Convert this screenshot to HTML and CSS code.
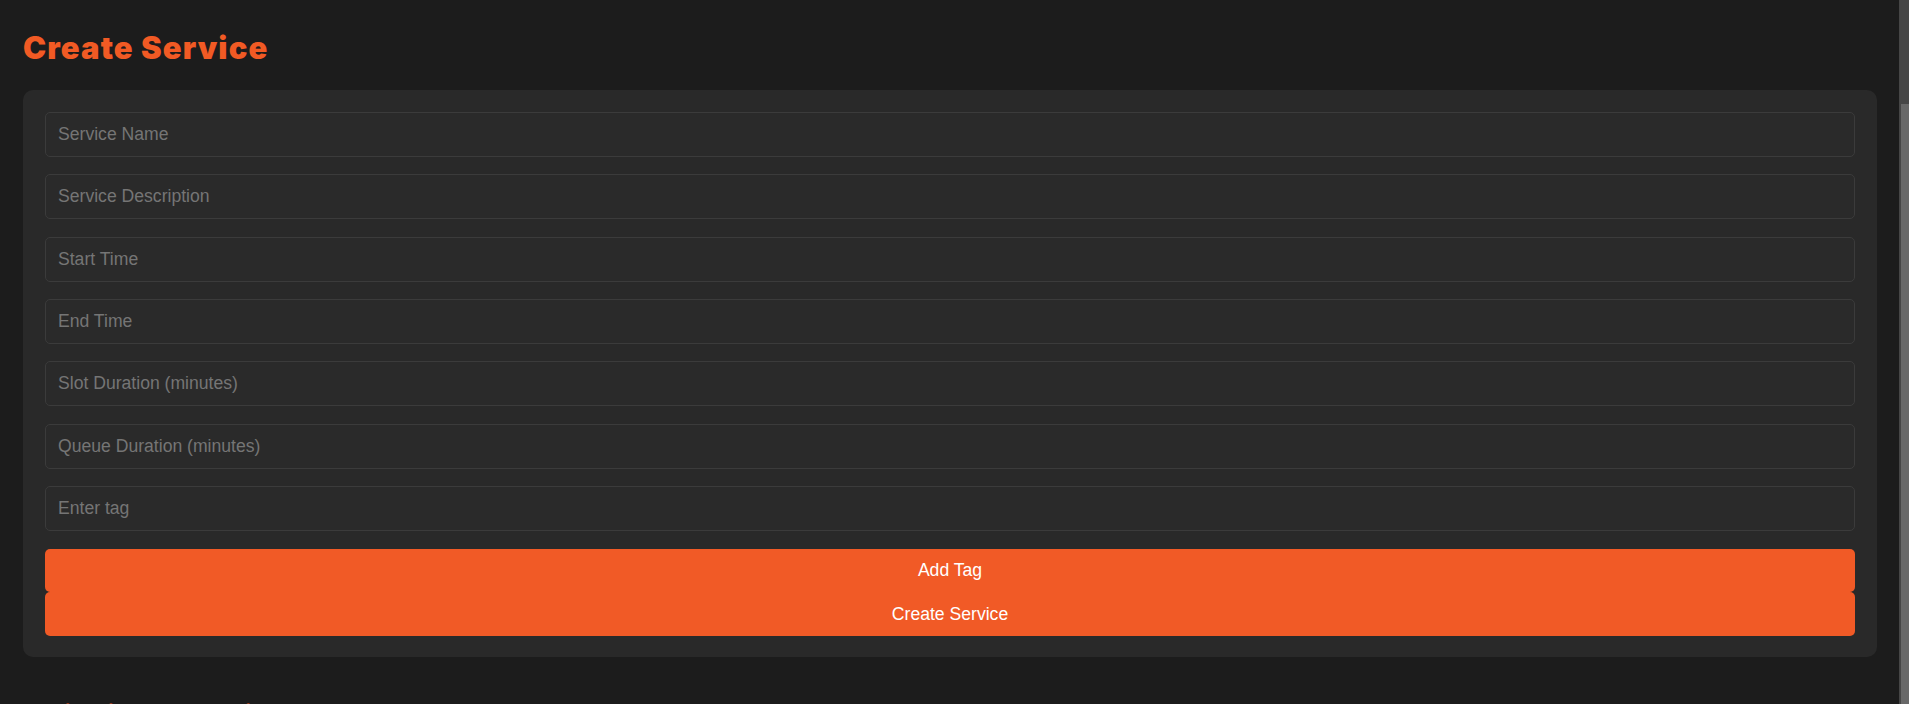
FILE: index.html
```html
<!DOCTYPE html>
<html lang="en">
<head>
<meta charset="utf-8">
<title>Create Service</title>
<link rel="stylesheet" href="styles.css">
</head>
<body>
<div class="viewport">
  <main class="page">
    <h1 class="title">Create Service</h1>
    <form class="card">
      <input class="field" type="text" placeholder="Service Name">
      <input class="field" type="text" placeholder="Service Description">
      <input class="field" type="text" placeholder="Start Time">
      <input class="field" type="text" placeholder="End Time">
      <input class="field" type="text" placeholder="Slot Duration (minutes)">
      <input class="field" type="text" placeholder="Queue Duration (minutes)">
      <input class="field" type="text" placeholder="Enter tag">
      <div class="actions">
        <button class="btn" type="button">Add Tag</button>
        <button class="btn" type="button">Create Service</button>
      </div>
    </form>
    <h2 class="title title-next">Existing Services</h2>
  </main>
  <div class="scrollbar"><div class="thumb"></div></div>
</div>
</body>
</html>
```
FILE: styles.css
```css
* { box-sizing: border-box; }

html, body {
  margin: 0;
  padding: 0;
  background: #1c1c1c;
}

.viewport {
  display: flex;
  width: 1909px;
  height: 704px;
  overflow: hidden;
}

.page {
  flex: 1;
  min-width: 0;
  height: 704px;
  overflow: hidden;
  padding: 0 22px 0 23px;
}

.title {
  margin: 28px 0 0;
  height: 62px;
  font-family: "Inter", "Liberation Sans", sans-serif;
  font-weight: 900;
  font-size: 31px;
  letter-spacing: 1.1px;
  line-height: 40px;
  color: #f15a24;
}

.title-next {
  margin-top: 40px;
}

.card {
  background: #292929;
  border-radius: 10px;
  padding: 22px 22px 21px;
  display: flex;
  flex-direction: column;
  gap: 17.33px;
}

.field {
  display: block;
  width: 100%;
  height: 45px;
  margin: 0;
  padding: 0 12px;
  background: #2a2a2a;
  border: 1px solid #3b3b3b;
  border-radius: 5px;
  font-family: "Liberation Sans", Arial, sans-serif;
  font-size: 17.6px;
  color: #dddddd;
  outline: none;
}

.field::placeholder {
  color: #757575;
}

.actions {
  display: flex;
  flex-direction: column;
  margin-top: 0.67px;
}

.btn {
  display: block;
  width: 100%;
  height: 43.5px;
  margin: 0;
  padding: 0;
  border: none;
  border-radius: 5px;
  background: #f15a26;
  color: #ffffff;
  font-family: "Liberation Sans", Arial, sans-serif;
  font-size: 17.6px;
  cursor: pointer;
}

.scrollbar {
  width: 10px;
  height: 704px;
  background: #464646;
  display: flex;
  flex-direction: column;
  padding: 104px 0 0 2px;
}

.thumb {
  flex: 1;
  background: #686868;
}
```
